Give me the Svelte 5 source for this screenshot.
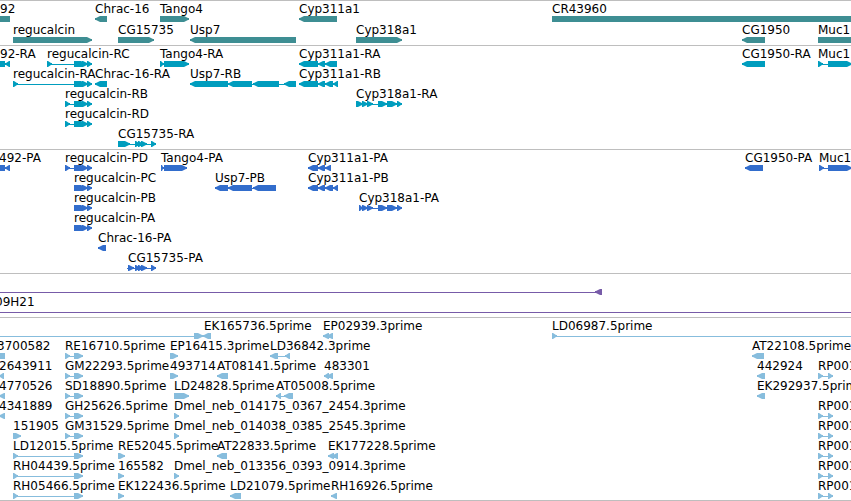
<script>
  // A part is [start, end, strand]: 1 forward, -1 reverse, 0 plain block, 'line' thin connector.
  const regEnd = [[74, 86, 1], [80, 90, 'line'], [82, 88, 1], [87, 92, 1]];
  const reg = (x) => [[x, x + 5, 1], [x, 75, 'line'], ...regEnd];
  const cgExons = [[127, 152, 'line'], [135, 140, 1], [138, 143, 1], [141, 147, 1], [151, 156, 1]];
  const cyp318 = [[362, 368, 1], [367, 373, 1], [370, 380, 'line'], [378, 387, 1], [387, 397, 1], [397, 402, 1]];
  const cyp311 = [[318, 325, -1], [325, 333, -1], [333, 338, -1]];
  const est = (x) => [[x, x + 5, 1], [x, 76, 'line'], [74, 83, 1]];
  const rp = ['RP001', 818, [[818, 823, 1], [818, 830, 'line'], [828, 833, 1]]];

  const tracks = [
    {
      name: 'gene',
      rows: [
        [
          ['92', 0, [[-10, 10, 0]]],
          ['Chrac-16', 95, [[95, 107, -1]]],
          ['Tango4', 160, [[160, 189, 1]]],
          ['Cyp311a1', 299, [[299, 337, -1]]],
          ['CR43960', 552, [[552, 3000, 1]]],
        ],
        [
          ['regucalcin', 13, [[13, 92, 1]]],
          ['CG15735', 118, [[118, 154, 1]]],
          ['Usp7', 190, [[190, 296, -1]]],
          ['Cyp318a1', 356, [[356, 402, 1]]],
          ['CG1950', 742, [[742, 765, -1]]],
          ['Muc1', 818, [[818, 3000, 1]]],
        ],
      ],
    },
    {
      name: 'mrna',
      rows: [
        [
          ['92-RA', 0, [[-10, 5, 0], [5, 10, -1]]],
          ['regucalcin-RC', 47, reg(47)],
          ['Tango4-RA', 160, [[160, 164, 1], [164, 189, 1]]],
          ['Cyp311a1-RA', 299, [[299, 318, -1], [318, 325, -1], [325, 337, -1]]],
          ['CG1950-RA', 742, [[742, 765, -1]]],
          ['Muc1', 818, [[818, 823, 1], [818, 830, 'line'], [828, 852, 1]]],
        ],
        [
          ['regucalcin-RA', 13, reg(13)],
          ['Chrac-16-RA', 95, [[95, 107, -1]]],
          ['Usp7-RB', 190, [[190, 228, -1], [228, 252, -1], [250, 290, 'line'], [253, 279, -1], [284, 296, -1]]],
          ['Cyp311a1-RB', 299, [[299, 318, -1], ...cyp311]],
        ],
        [
          ['regucalcin-RB', 65, reg(65)],
          ['Cyp318a1-RA', 356, [[356, 363, 1], ...cyp318]],
        ],
        [['regucalcin-RD', 65, reg(65)]],
        [['CG15735-RA', 118, [[118, 130, 1], ...cgExons]]],
      ],
    },
    {
      name: 'cds',
      rows: [
        [
          ['492-PA', -1, [[-10, 5, 0], [5, 10, -1]]],
          ['regucalcin-PD', 65, reg(65)],
          ['Tango4-PA', 161, [[161, 164, 1], [164, 187, 1]]],
          ['Cyp311a1-PA', 308, [[308, 318, -1], [318, 325, -1], [325, 331, -1]]],
          ['CG1950-PA', 745, [[745, 763, -1]]],
          ['Muc1', 819, [[819, 824, 1], [819, 830, 'line'], [828, 852, 1]]],
        ],
        [
          ['regucalcin-PC', 74, regEnd],
          ['Usp7-PB', 215, [[215, 228, -1], [228, 252, -1], [250, 258, 'line'], [253, 276, -1]]],
          ['Cyp311a1-PB', 308, [[308, 318, -1], ...cyp311]],
        ],
        [
          ['regucalcin-PB', 74, regEnd],
          ['Cyp318a1-PA', 359, [[359, 363, 1], ...cyp318]],
        ],
        [['regucalcin-PA', 74, regEnd]],
        [['Chrac-16-PA', 98, [[98, 106, -1]]]],
        [['CG15735-PA', 128, [[128, 134, 1], ...cgExons]]],
      ],
    },
    {
      name: 'clone',
      rows: [
        [['', 0, [[-10, 598, 'line'], [595, 602, -1]]]],
        [['09H21', -5, [[-10, 3000, 'line']]]],
      ],
    },
    {
      name: 'est',
      rows: [
        [
          ['EK165736.5prime', 204, [[-10, 206, 'line'], [194, 203, 1], [203, 211, -1]]],
          ['EP02939.3prime', 323, [[323, 329, -1], [327, 333, -1]]],
          ['LD06987.5prime', 552, [[552, 557, 1], [552, 3000, 'line']]],
        ],
        [
          ['3700582', -3, [[-10, 5, 0]]],
          ['RE16710.5prime', 65, est(65)],
          ['EP16415.3prime', 170, [[170, 178, 1]]],
          ['LD36842.3prime', 270, [[270, 278, -1], [276, 288, 'line'], [285, 290, -1]]],
          ['AT22108.5prime', 752, [[752, 764, -1]]],
        ],
        [
          ['2643911', -1, [[-1, 4, -1]]],
          ['GM22293.5prime', 65, est(65)],
          ['493714', 170, [[170, 178, 1]]],
          ['AT08141.5prime', 217, [[217, 228, -1]]],
          ['483301', 324, [[324, 329, -1], [327, 333, -1]]],
          ['442924', 757, [[757, 765, -1]]],
          rp,
        ],
        [
          ['4770526', -1, [[-1, 5, -1]]],
          ['SD18890.5prime', 65, est(65)],
          ['LD24828.5prime', 174, [[174, 189, 1]]],
          ['AT05008.5prime', 276, [[276, 281, -1], [279, 290, 'line'], [284, 293, -1]]],
          ['EK292937.5prime', 757, [[757, 765, -1]]],
        ],
        [
          ['4341889', -1, [[-1, 5, -1]]],
          ['GH25626.5prime', 65, est(65)],
          ['Dmel_neb_014175_0367_2454.3prime', 174, [[174, 179, 1]]],
          rp,
        ],
        [
          ['151905', 13, [[13, 21, 1]]],
          ['GM31529.5prime', 65, est(65)],
          ['Dmel_neb_014038_0385_2545.3prime', 174, [[174, 179, 1]]],
          rp,
        ],
        [
          ['LD12015.5prime', 13, est(13)],
          ['RE52045.5prime', 118, [[118, 125, 1]]],
          ['AT22833.5prime', 217, [[217, 227, -1]]],
          ['EK177228.5prime', 328, [[328, 334, -1], [332, 338, -1]]],
          rp,
        ],
        [
          ['RH04439.5prime', 13, est(13)],
          ['165582', 118, [[118, 124, 1]]],
          ['Dmel_neb_013356_0393_0914.3prime', 174, [[174, 179, 1]]],
          rp,
        ],
        [
          ['RH05466.5prime', 13, est(13)],
          ['EK122436.5prime', 118, [[118, 124, 1]]],
          ['LD21079.5prime', 230, [[230, 241, -1]]],
          ['RH16926.5prime', 331, [[331, 337, -1]]],
          rp,
        ],
      ],
    },
  ];

  // Every outline runs clockwise, so overlapping parts merge into one filled glyph.
  function shape([a, b, strand]) {
    if (strand === 'line') return `M${a} 3H${b}V4H${a}Z`;
    if (strand === 0) return `M${a} 0H${b}V6H${a}Z`;
    const head = Math.min(5, b - a - 1);
    if (strand === 1) {
      return `M${a} 0H${b - head}L${b - 1} 2H${b}V4H${b - 1}L${b - head} 6H${a}Z`;
    }
    return `M${a + head} 0H${b}V6H${a + head}L${a + 1} 4H${a}V2H${a + 1}Z`;
  }
</script>

<main class="browser">
  {#each tracks as track}
    <section class="track {track.name}">
      {#each track.rows as row}
        <div class="row">
          <div class="labels">
            {#each row as [label, x]}
              {#if label}<span class="label" style="left: {x}px">{label}</span>{/if}
            {/each}
          </div>
          <svg class="glyphs" aria-hidden="true">
            {#each row as feature}
              <path d={feature[2].map(shape).join('')} />
            {/each}
          </svg>
        </div>
      {/each}
    </section>
  {/each}
</main>

<style>
  :global(body) {
    margin: 0;
    background: #fff;
  }

  .browser {
    overflow: hidden;
    border-bottom: 1px solid #bebebe;
    font: 12px/14px 'DejaVu Sans', Verdana, sans-serif;
    color: #000;
  }

  .track {
    border-top: 1px solid #bebebe;
    padding-bottom: 3px;
  }

  .gene,
  .est {
    padding-bottom: 2px;
  }

  .row {
    display: flex;
    flex-direction: column;
    height: 20px;
  }

  .gene .row {
    height: 21px;
  }

  .labels {
    position: relative;
    height: 15px;
    flex: none;
  }

  .label {
    position: absolute;
    top: 1px;
    white-space: nowrap;
  }

  .glyphs {
    display: block;
    width: 100%;
    height: 6px;
    flex: none;
    overflow: hidden;
  }

  .gene { fill: #3e8e93; }
  .mrna { fill: #009dbe; }
  .cds { fill: #326dcc; }
  .clone { fill: #775ba8; }
  .est { fill: #87bddd; }
</style>
